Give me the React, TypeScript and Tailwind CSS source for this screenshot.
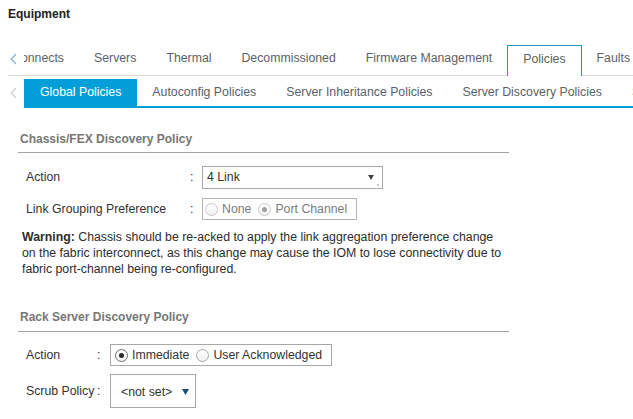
import React from "react";

function Radio({ checked, disabled }: { checked?: boolean; disabled?: boolean }) {
  const border = disabled ? "border-[#c8c8c8]" : checked ? "border-[#6d6d6d]" : "border-[#a9a9a9]";
  return (
    <span
      className={`flex h-[13px] w-[13px] shrink-0 items-center justify-center rounded-full border bg-gradient-to-b from-white to-[#f1f1f1] ${border}`}
    >
      {checked && (
        <span className={`h-[5px] w-[5px] rounded-full ${disabled ? "bg-[#a0a0a0]" : "bg-[#2a2a2a]"}`} />
      )}
    </span>
  );
}

function Chevron({ color }: { color: string }) {
  return (
    <svg width="7" height="12" viewBox="0 0 7 12" fill="none">
      <path d="M6 1 L1.2 6 L6 11" stroke={color} strokeWidth="1.2" />
    </svg>
  );
}

export default function App() {
  const topTabs = ["Servers", "Thermal", "Decommissioned", "Firmware Management"];
  const subTabs = ["Autoconfig Policies", "Server Inheritance Policies", "Server Discovery Policies", "Server Pool Policies"];
  return (
    <div className="h-[419px] w-[633px] overflow-hidden bg-white font-['Liberation_Sans',Arial,sans-serif] text-[12.3px] text-[#333]">
      <div className="pl-[8px] pt-[6px] text-[12px] font-bold leading-[16px] text-[#222]">Equipment</div>

      {/* top tabs */}
      <div className="ml-[8px] mt-[23px] flex h-[31px] border-b border-[#d9d9d9] text-[#5b6169]">
        <div className="flex h-[30px] w-[16px] shrink-0 items-center pb-[3px] pl-[2px]">
          <Chevron color="#7fb0d4" />
        </div>
        <div className="flex h-[30px] w-[55px] shrink-0 items-center justify-end overflow-hidden whitespace-nowrap pb-[3px] pr-[15px]">
          <span>Interconnects</span>
        </div>
        {topTabs.map((t) => (
          <div key={t} className="flex h-[30px] shrink-0 items-center whitespace-nowrap px-[15px] pb-[3px]">
            {t}
          </div>
        ))}
        <div className="flex h-[31px] shrink-0 items-center whitespace-nowrap border-x border-t border-[#2a93bd] bg-white px-[15px] pb-[4px]">
          Policies
        </div>
        <div className="flex h-[30px] shrink-0 items-center whitespace-nowrap px-[15px] pb-[3px]">Faults</div>
      </div>

      {/* sub tabs */}
      <div className="ml-[8px] mt-[3px] flex h-[29px] text-[#5b6169]">
        <div className="flex h-[27px] w-[16px] shrink-0 items-center pl-[2px]">
          <Chevron color="#cfcfcf" />
        </div>
        <div className="flex min-w-0 flex-1 overflow-hidden border-b-2 border-[#049fd9]">
          <div className="flex h-[27px] shrink-0 items-center whitespace-nowrap bg-[#049fd9] px-[16px] text-white">
            Global Policies
          </div>
          {subTabs.map((t) => (
            <div key={t} className="flex h-[27px] shrink-0 items-center whitespace-nowrap px-[15px]">
              {t}
            </div>
          ))}
        </div>
      </div>

      {/* content */}
      <div className="ml-[18px] w-[491px]">
        <div className="mt-[23px] border-b border-[#a3a3a3] pb-[5px] pl-[2px] text-[12px] font-bold leading-[16px] text-[#767676]">
          Chassis/FEX Discovery Policy
        </div>

        <div className="mt-[13px] flex h-[23px] items-center pl-[8px]">
          <div className="w-[163px] shrink-0">Action</div>
          <div className="w-[13px] shrink-0 pl-[1px]">:</div>
          <div className="relative flex h-[23px] w-[181px] shrink-0 items-center border border-[#a8a8a8] pl-[4px]">
            <span>4 Link</span>
            <svg className="absolute right-[8px] top-[8px]" width="6" height="5" viewBox="0 0 6 5">
              <polygon points="0,0 6,0 3,5" fill="#444" />
            </svg>
            <span className="absolute bottom-[2px] right-[3px] h-[2px] w-[2px] bg-[#c4c4c4]" />
          </div>
        </div>

        <div className="mt-[9px] flex h-[22px] items-center pl-[8px]">
          <div className="w-[163px] shrink-0">Link Grouping Preference</div>
          <div className="w-[13px] shrink-0 pl-[1px]">:</div>
          <div className="flex h-[22px] w-[155px] shrink-0 items-center border border-[#b3b3b3] pl-[2px] text-[#7b7b7b]">
            <Radio disabled />
            <span className="ml-[4px]">None</span>
            <span className="ml-[7px]">
              <Radio checked disabled />
            </span>
            <span className="ml-[4px]">Port Channel</span>
          </div>
        </div>

        <div className="mt-[9px] whitespace-nowrap pl-[4px] leading-[16px] text-[#2d2d2d]">
          <span className="font-bold">Warning:</span> Chassis should be re-acked to apply the link aggregation preference change
          <br />
          on the fabric interconnect, as this change may cause the IOM to lose connectivity due to
          <br />
          fabric port-channel being re-configured.
        </div>

        <div className="mt-[32px] border-b border-[#a3a3a3] pb-[6px] pl-[2px] text-[12px] font-bold leading-[16px] text-[#767676]">
          Rack Server Discovery Policy
        </div>

        <div className="mt-[12px] flex h-[22px] items-center pl-[8px]">
          <div className="w-[70px] shrink-0">Action</div>
          <div className="w-[14px] shrink-0 pl-[1px]">:</div>
          <div className="flex h-[22px] w-[222px] shrink-0 items-center border border-[#a8a8a8] pl-[4px]">
            <Radio checked />
            <span className="ml-[4px]">Immediate</span>
            <span className="ml-[7px]">
              <Radio />
            </span>
            <span className="ml-[4px]">User Acknowledged</span>
          </div>
        </div>

        <div className="mt-[8px] flex h-[34px] items-center pl-[8px]">
          <div className="w-[70px] shrink-0">Scrub Policy</div>
          <div className="w-[14px] shrink-0 pl-[1px]">:</div>
          <div className="flex h-[34px] w-[86px] shrink-0 items-center border border-[#a8a8a8] pl-[10px] pt-[2px]">
            <span>&lt;not set&gt;</span>
            <svg className="ml-[10px]" width="7" height="6" viewBox="0 0 7 6">
              <polygon points="0,0 7,0 3.5,6" fill="#1d4d77" />
            </svg>
          </div>
        </div>
      </div>
    </div>
  );
}
